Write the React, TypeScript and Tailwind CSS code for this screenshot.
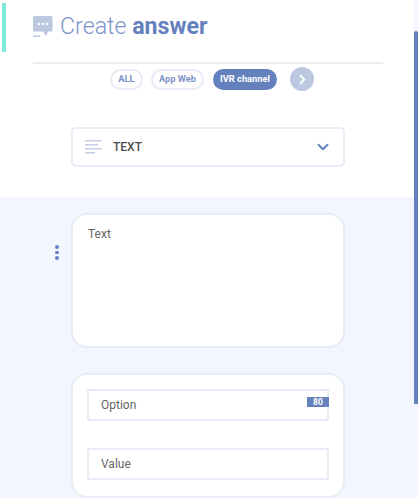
import { ChevronDown, ChevronRight } from "lucide-react";

function ChatIcon() {
  return (
    <svg width="20" height="22" viewBox="0 0 20 22" className="shrink-0">
      <path d="M1.5 0H18a1.5 1.5 0 0 1 1.500 1.500V14a1.500 1.500 0 0 1-1.500 1.500h-3L13 20l-3-4.500H1.500A1.500 1.500 0 0 1 0 14V1.500A1.500 1.500 0 0 1 1.500 0Z" fill="#bcc7e0" />
      <circle cx="6" cy="8" r="1.300" fill="#fff" />
      <circle cx="10" cy="8" r="1.300" fill="#fff" />
      <circle cx="14" cy="8" r="1.300" fill="#fff" />
      <rect x="0" y="19.500" width="7" height="1.500" fill="#bcc7e0" />
    </svg>
  );
}

function LinesIcon() {
  return (
    <svg width="17" height="14" viewBox="0 0 17 14" className="shrink-0">
      <rect x="0" y="0" width="17" height="1.500" fill="#c3cde3" />
      <rect x="0" y="4" width="13" height="1.500" fill="#c3cde3" />
      <rect x="0" y="8" width="17" height="1.500" fill="#c3cde3" />
      <rect x="0" y="12" width="10" height="1.500" fill="#c3cde3" />
    </svg>
  );
}

export default function App() {
  return (
    <div className="flex h-[498px] w-[418px] overflow-hidden bg-white font-['Roboto',sans-serif]">
      <main className="flex w-[414px] flex-col">
        <section className="relative h-[197px] bg-white pl-[33px] pr-[31px] pt-[16px]">
          <div className="absolute left-[2px] top-[3px] h-[49px] w-[4px] bg-[#7cecd9]" />
          <div className="flex h-[22px] items-center gap-[7px]">
            <ChatIcon />
            <h1 className="text-[23.2px] leading-none font-light text-[#7d94c9]">
              Create <span className="font-bold text-[#6480bd]">answer</span>
            </h1>
          </div>
          <div className="mt-[24px] h-[2px] bg-[#ebeef3]" />
          <div className="mt-[3px] flex h-[24px] items-center pl-[77px] text-[9.300px] font-bold">
            <span className="flex h-[21px] w-[33px] items-center justify-center rounded-full border-2 border-[#e8ecf7] text-[#7d94c9]">ALL</span>
            <span className="ml-[8px] flex h-[21px] w-[53px] items-center justify-center rounded-full border-2 border-[#e8ecf7] text-[#7d94c9]">App Web</span>
            <span className="ml-[9px] flex h-[21px] w-[64px] items-center justify-center rounded-full bg-[#6480bd] text-white">IVR channel</span>
            <span className="ml-[13px] flex size-[24px] items-center justify-center rounded-full bg-[#bcc7e0] text-white">
              <ChevronRight size={15} strokeWidth={3} />
            </span>
          </div>
          <div className="mt-[36px] ml-[38px] flex h-[40px] w-[274px] items-center rounded-[5px] border-2 border-[#e8ecf7] pl-[12px] pr-[11px]">
            <LinesIcon />
            <span className="ml-[11px] flex-1 text-[12px] font-medium text-[#4e4e4e]">TEXT</span>
            <ChevronDown size={18} strokeWidth={2.5} className="text-[#6480bd]" />
          </div>
        </section>
        <section className="flex flex-1 flex-col bg-[#f3f6fe] pl-[71px] pt-[16px]">
          <div className="relative h-[135px] w-[274px] rounded-[16px] border-2 border-[#e8ecf7] bg-white px-[15px] pt-[12px] text-[12px] leading-[14px] text-[#666666]">
            Text
            <div className="absolute left-[-18px] top-[30px] flex flex-col gap-[2px]">
              <span className="size-[3.500px] rounded-full bg-[#6480bd]" />
              <span className="size-[3.500px] rounded-full bg-[#6480bd]" />
              <span className="size-[3.500px] rounded-full bg-[#6480bd]" />
            </div>
          </div>
          <div className="mt-[25px] flex h-[125px] w-[274px] flex-col gap-[27px] rounded-[16px] border-2 border-[#e8ecf7] bg-white px-[14px] pt-[14px] text-[12px] text-[#666666]">
            <div className="relative flex h-[32px] items-center border-2 border-[#e8ecf7] pl-[12px]">
              Option
              <span className="absolute right-[-2px] top-[6px] flex h-[10px] w-[22px] items-center justify-center bg-[#6480bd] text-[8.500px] leading-none font-bold text-white">80</span>
            </div>
            <div className="flex h-[32px] items-center border-2 border-[#e8ecf7] pl-[12px]">Value</div>
          </div>
        </section>
      </main>
      <div className="w-[4px] bg-[#f3f6fe] pt-[31px]">
        <div className="h-[373px] rounded-t-[2px] bg-[#6480bd]" />
      </div>
    </div>
  );
}
